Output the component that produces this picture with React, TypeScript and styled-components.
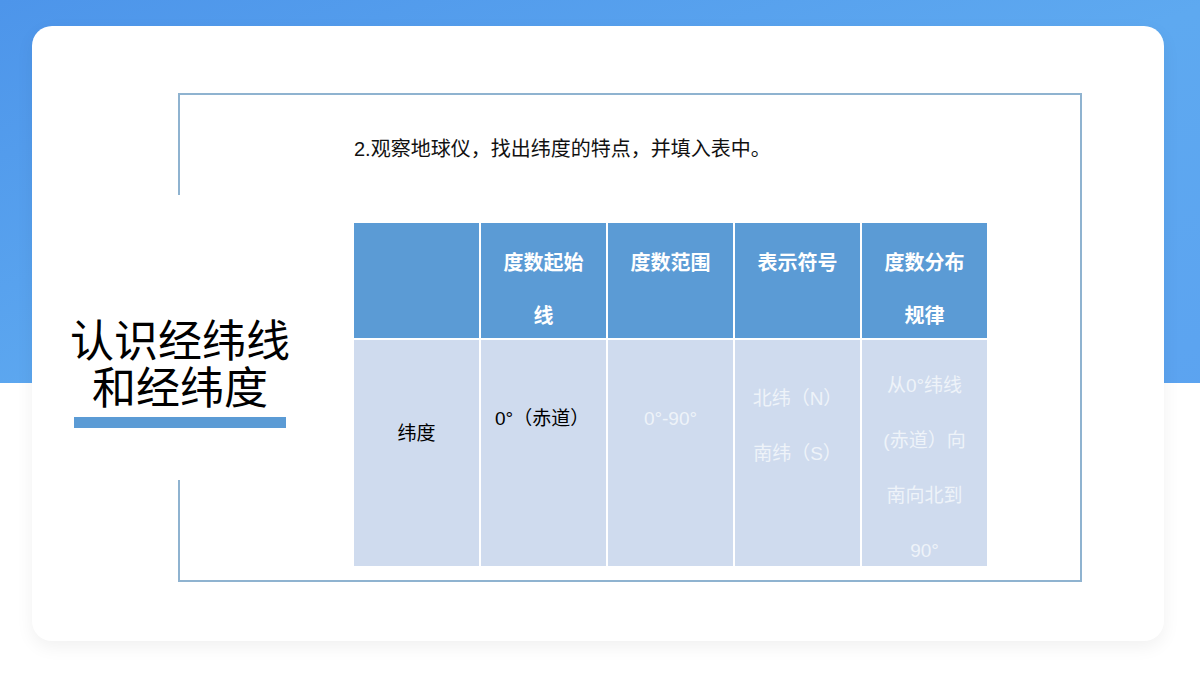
import React from 'react';
import styled, { createGlobalStyle } from 'styled-components';

const GlobalStyle = createGlobalStyle`
  html, body { margin: 0; padding: 0; }
  body {
    width: 1200px;
    height: 675px;
    overflow: hidden;
    background: linear-gradient(to bottom, transparent 383px, #fff 383px),
      linear-gradient(160deg, #4d95ea 0%, #5ea9f0 40%, #5a9ff0 100%);
    font-family: "Liberation Sans", "Noto Sans CJK SC", sans-serif;
  }
`;

const Card = styled.div`
  margin: 26px 36px 0 32px;
  height: 615px;
  background: #fff;
  border-radius: 20px;
  box-shadow: 0 6px 18px rgba(0, 0, 0, 0.06);
  padding: 67px 0 0 146px;
  box-sizing: border-box;
`;

const Frame = styled.div`
  position: relative;
  width: 904px;
  height: 489px;
  border: 2px solid #8fb3d0;
  box-sizing: border-box;
  padding: 40px 0 0 174px;
`;

const TitleBlock = styled.div`
  position: absolute;
  left: -112px;
  top: 100px;
  width: 224px;
  height: 285px;
  background: #fff;
  display: flex;
  flex-direction: column;
  align-items: center;
  padding-top: 124px;
  box-sizing: border-box;
`;

const Title = styled.h1`
  margin: 0;
  font-family: "Liberation Serif", "Noto Sans CJK SC", serif;
  font-weight: normal;
  font-size: 44px;
  line-height: 47px;
  color: #000;
  text-align: center;
`;

const TitleBar = styled.div`
  width: 212px;
  height: 11px;
  background: #5b9bd5;
  margin-top: 4px;
`;

const Prompt = styled.p`
  margin: 0 0 60px;
  font-size: 20px;
  line-height: 28px;
  color: #111;
`;

const Table = styled.div`
  display: grid;
  grid-template-columns: repeat(5, 125px);
  grid-template-rows: 115px 226px;
  gap: 2px;
  width: 633px;
`;

const Head = styled.div`
  background: #5b9bd5;
  color: #fff;
  font-weight: bold;
  font-size: 20px;
  line-height: 53px;
  text-align: center;
  padding: 14px 8px 0;
`;

const Cell = styled.div<{ $dark?: boolean; $align?: string }>`
  background: #cfdbee;
  color: ${({ $dark }) => ($dark ? '#000' : '#eef3f9')};
  font-size: 19px;
  line-height: 55px;
  display: flex;
  flex-direction: column;
  justify-content: center;
  align-items: ${({ $align }) => $align || 'center'};
  text-align: center;
  padding: 0 6px;
  white-space: nowrap;
  overflow: visible;
`;

export default function App() {
  return (
    <>
      <GlobalStyle />
      <Card>
        <Frame>
          <TitleBlock>
            <Title>
              认识经纬线
              <br />
              和经纬度
            </Title>
            <TitleBar />
          </TitleBlock>
          <Prompt>2.观察地球仪，找出纬度的特点，并填入表中。</Prompt>
          <Table>
            <Head />
            <Head>度数起始<br />线</Head>
            <Head>度数范围</Head>
            <Head>表示符号</Head>
            <Head>度数分布<br />规律</Head>
            <Cell $dark style={{ paddingBottom: 40 }}>纬度</Cell>
            <Cell $dark $align="flex-start" style={{ paddingBottom: 70, paddingLeft: 14 }}>0°（赤道）</Cell>
            <Cell style={{ paddingBottom: 70 }}>0°-90°</Cell>
            <Cell style={{ paddingBottom: 54 }}>北纬（N）<br />南纬（S）</Cell>
            <Cell style={{ lineHeight: '55px', paddingTop: 30 }}>从0°纬线<br />(赤道）向<br />南向北到<br />90°</Cell>
          </Table>
        </Frame>
      </Card>
    </>
  );
}
